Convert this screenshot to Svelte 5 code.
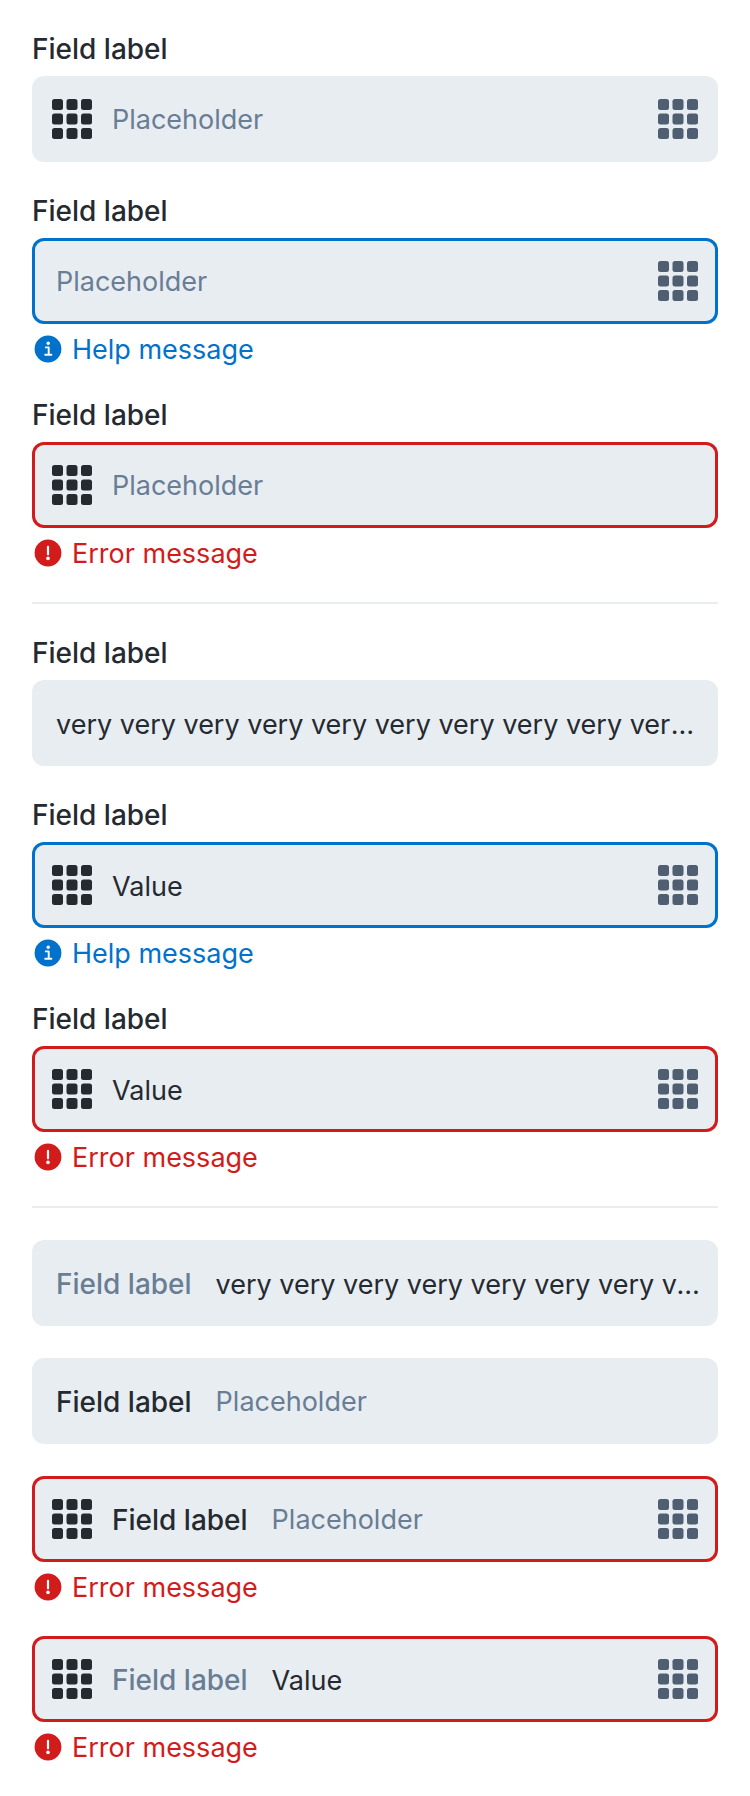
<script>
  const long = 'very '.repeat(16).trim();
  const groups = [
    [
      { prefix: true, suffix: true },
      { suffix: true, help: 'Help message' },
      { prefix: true, error: 'Error message' }
    ],
    [
      { value: long },
      { prefix: true, suffix: true, value: 'Value', help: 'Help message' },
      { prefix: true, suffix: true, value: 'Value', error: 'Error message' }
    ],
    [
      { inline: true, value: long },
      { inline: true },
      { inline: true, prefix: true, suffix: true, error: 'Error message' },
      { inline: true, prefix: true, suffix: true, value: 'Value', error: 'Error message' }
    ]
  ];
  const cells = [4, 18.5, 33];
</script>

{#snippet grid(kind)}
  <svg class="grid {kind}" viewBox="0 0 48 48" aria-hidden="true">
    {#each cells as y}
      {#each cells as x}
        <rect {x} {y} width="11" height="11" rx="2.5" />
      {/each}
    {/each}
  </svg>
{/snippet}

<main>
  {#each groups as fields, g}
    {#if g > 0}<hr />{/if}
    {#each fields as f, i}
      {@const id = `field-${g}-${i}`}
      <div class="field">
        {#if !f.inline}<label class="label" for={id}>Field label</label>{/if}
        <div class="box" class:help={f.help} class:error={f.error} class:prefixed={f.prefix}>
          {#if f.prefix}{@render grid('dark')}{/if}
          {#if f.inline}<label class="inline" class:filled={f.value} for={id}>Field label</label>{/if}
          <input {id} type="text" placeholder="Placeholder" value={f.value ?? ''} />
          {#if f.suffix}{@render grid('soft')}{/if}
        </div>
        {#if f.help}
          <div class="message info">
            <svg viewBox="0 0 32 32" aria-hidden="true">
              <circle cx="16" cy="15" r="13.4" fill="currentColor" />
              <circle cx="16.2" cy="9.2" r="1.7" fill="#fff" />
              <path d="M13.8 13.4h2.9v7.2M13.2 20.8h6.2" fill="none" stroke="#fff" stroke-width="1.9" stroke-linecap="round" stroke-linejoin="round" />
            </svg>
            <span>{f.help}</span>
          </div>
        {/if}
        {#if f.error}
          <div class="message alert">
            <svg viewBox="0 0 32 32" aria-hidden="true">
              <circle cx="16" cy="15" r="13.4" fill="currentColor" />
              <path d="M16 8.9v7.4" fill="none" stroke="#fff" stroke-width="2.2" stroke-linecap="round" />
              <circle cx="16" cy="20.4" r="1.8" fill="#fff" />
            </svg>
            <span>{f.error}</span>
          </div>
        {/if}
      </div>
    {/each}
  {/each}
</main>

<style>
  :global(body) {
    background: #fff;
  }
  main {
    display: flex;
    flex-direction: column;
    gap: 32px;
    padding: 32px;
    font: 400 27px/34px Inter, 'Liberation Sans', sans-serif;
    color: #252a31;
  }
  hr {
    width: 100%;
    height: 2px;
    margin: 0;
    border: 0;
    background: #e8edf1;
  }
  .field {
    display: flex;
    flex-direction: column;
  }
  .label,
  .inline {
    font-size: 28px;
    font-weight: 500;
  }
  .label {
    margin-bottom: 10px;
  }
  .box {
    display: flex;
    align-items: center;
    gap: 16px;
    box-sizing: border-box;
    height: 86px;
    padding: 0 16px 0 24px;
    border-radius: 12px;
    background: #e8edf1;
  }
  .prefixed {
    padding-left: 16px;
  }
  .help {
    box-shadow: inset 0 0 0 3px #0172cb;
  }
  .error {
    box-shadow: inset 0 0 0 3px #d21c1c;
  }
  .inline {
    flex: none;
    margin-right: 8px;
    padding-top: 2px;
  }
  .inline.filled {
    color: #697d95;
  }
  input {
    flex: 1;
    min-width: 0;
    height: 36px;
    padding: 0;
    border: 0;
    outline: 0;
    background: transparent;
    font: inherit;
    color: inherit;
    text-overflow: ellipsis;
  }
  input:not(:placeholder-shown) {
    padding-top: 2px;
  }
  input::placeholder {
    color: #697d95;
    opacity: 1;
  }
  .grid {
    flex: none;
    width: 48px;
    height: 48px;
  }
  .dark {
    fill: #252a31;
  }
  .soft {
    fill: #4f5e71;
  }
  .message {
    display: flex;
    align-items: center;
    gap: 8px;
    margin-top: 10px;
    line-height: 32px;
  }
  .message svg {
    flex: none;
    width: 32px;
    height: 32px;
  }
  .info {
    color: #0172cb;
  }
  .alert {
    color: #d21c1c;
  }
</style>
